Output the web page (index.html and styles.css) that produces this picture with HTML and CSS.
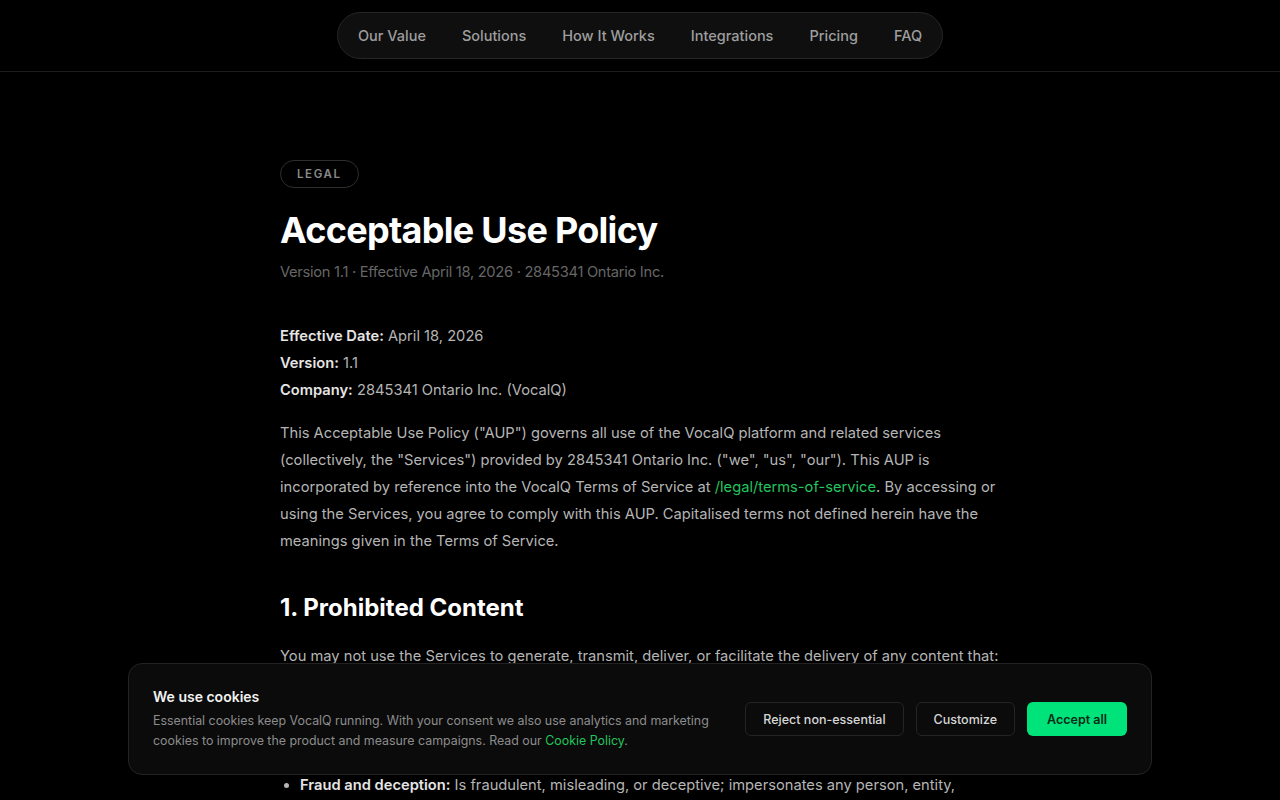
FILE: index.html
```html
<!DOCTYPE html>
<html lang="en">
<head>
  <meta charset="UTF-8" />
  <meta name="viewport" content="width=device-width, initial-scale=1" />
  <title>Acceptable Use Policy · VocalQ</title>
  <link rel="stylesheet" href="styles.css">
</head>
<body>
  <header class="site-header">
    <nav class="nav-pill">
      <a href="#">Our Value</a>
      <a href="#">Solutions</a>
      <a href="#">How It Works</a>
      <a href="#">Integrations</a>
      <a href="#">Pricing</a>
      <a href="#">FAQ</a>
    </nav>
  </header>

  <main class="legal">
    <span class="badge">LEGAL</span>
    <h1>Acceptable Use Policy</h1>
    <p class="subtitle">Version 1.1 · Effective April 18, 2026 · 2845341 Ontario Inc.</p>

    <div class="meta">
      <div><strong>Effective Date:</strong> April 18, 2026</div>
      <div><strong>Version:</strong> 1.1</div>
      <div><strong>Company:</strong> 2845341 Ontario Inc. (VocalQ)</div>
    </div>

    <p>This Acceptable Use Policy ("AUP") governs all use of the VocalQ platform and related services (collectively, the "Services") provided by 2845341 Ontario Inc. ("we", "us", "our"). This AUP is incorporated by reference into the VocalQ Terms of Service at <a href="#">/legal/terms-of-service</a>. By accessing or using the Services, you agree to comply with this AUP. Capitalised terms not defined herein have the meanings given in the Terms of Service.</p>

    <h2>1. Prohibited Content</h2>
    <p>You may not use the Services to generate, transmit, deliver, or facilitate the delivery of any content that:</p>
    <ul>
      <li><strong>Illegal content:</strong> Violates any applicable law or regulation in any jurisdiction where the content is sent, stored or received.</li>
      <li><strong>Harmful content:</strong> Is threatening, abusive, harassing, defamatory or hateful.</li>
      <li><strong>Fraud and deception:</strong> Is fraudulent, misleading, or deceptive; impersonates any person, entity, or organisation, or misrepresents your affiliation with them.</li>
    </ul>
  </main>

  <div class="cookie-banner">
    <div class="cookie-text">
      <h3>We use cookies</h3>
      <p>Essential cookies keep VocalQ running. With your consent we also use analytics and marketing cookies to improve the product and measure campaigns. Read our <a href="#">Cookie Policy</a>.</p>
    </div>
    <div class="cookie-actions">
      <button class="btn-ghost">Reject non-essential</button>
      <button class="btn-ghost">Customize</button>
      <button class="btn-accept">Accept all</button>
    </div>
  </div>
</body>
</html>
```

FILE: styles.css
```css
body {
  font-family: Inter, 'Noto Sans', sans-serif;
  background-color: #000;
  color: #b5b5b5;
  margin: 0;
}

a {
  color: #22c55e;
  text-decoration: none;
}

/* top bar */
.site-header {
  height: 71px;
  border-bottom: 1px solid #1c1c1e;
  display: flex;
  justify-content: center;
  align-items: center;
}

.nav-pill {
  display: flex;
  padding: 2px;
  border: 1px solid #262626;
  border-radius: 999px;
  background-color: #0f0f0f;
}

.nav-pill a {
  padding: 12px 18px;
  font-size: 14.5px;
  color: #9e9e9e;
  font-weight: 500;
}

/* document body */
.legal {
  width: 720px;
  margin: 0 auto;
  padding: 88px 0 120px;
}

.badge {
  display: inline-block;
  padding: 6px 16px;
  border: 1px solid #2e2e2e;
  border-radius: 999px;
  font-size: 11.5px;
  font-weight: 600;
  letter-spacing: 0.14em;
  color: #8a8a8a;
}

h1 {
  margin: 20px 0 0;
  font-size: 36px;
  font-weight: 700;
  letter-spacing: -0.02em;
  color: #fff;
  line-height: 44px;
}

.subtitle {
  margin: 7px 0 0;
  font-size: 12.2px;
  letter-spacing: -0.02em;
  color: #666;
}

.meta {
  margin-top: 37px;
  font-size: 14.7px;
  line-height: 27px;
}

.legal strong {
  color: #e5e5e5;
  font-weight: 600;
}

.legal p {
  font-size: 14.7px;
  line-height: 27px;
}

.meta + p {
  margin-top: 16px;
}

h2 {
  margin: 37px 0 0;
  font-size: 24px;
  font-weight: 700;
  color: #fff;
  line-height: 32px;
}

h2 + p {
  margin-top: 19px;
  margin-bottom: 0;
}

.legal ul {
  margin: 9px 30px 0 0;
  padding-left: 20px;
  font-size: 14.7px;
  line-height: 27px;
}

.legal li {
  margin-bottom: 6px;
}

/* consent banner */
.cookie-banner {
  position: fixed;
  left: 128px;
  right: 128px;
  bottom: 25px;
  height: 112px;
  box-sizing: border-box;
  padding: 0 24px;
  background-color: #0b0b0b;
  border: 1px solid #232323;
  border-radius: 14px;
  display: flex;
  align-items: center;
  justify-content: space-between;
}

.cookie-text h3 {
  margin: 0 0 6px;
  font-size: 14px;
  font-weight: 600;
  color: #f2f2f2;
}

.cookie-text p {
  margin: 0;
  width: 570px;
  font-size: 12.4px;
  line-height: 20px;
  color: #8d8d8d;
}

.cookie-actions {
  display: flex;
  gap: 12px;
}

.cookie-actions button {
  height: 34px;
  padding: 0 17px;
  border-radius: 6px;
  font-family: inherit;
  font-size: 12.5px;
  font-weight: 500;
  cursor: pointer;
}

.btn-ghost {
  background-color: #0b0b0b;
  border: 1px solid #242424;
  color: #d6d6d6;
}

.cookie-actions .btn-accept {
  background-color: #00e27a;
  border: none;
  color: #062a16;
  font-weight: 600;
  padding: 0 20px;
}
```
